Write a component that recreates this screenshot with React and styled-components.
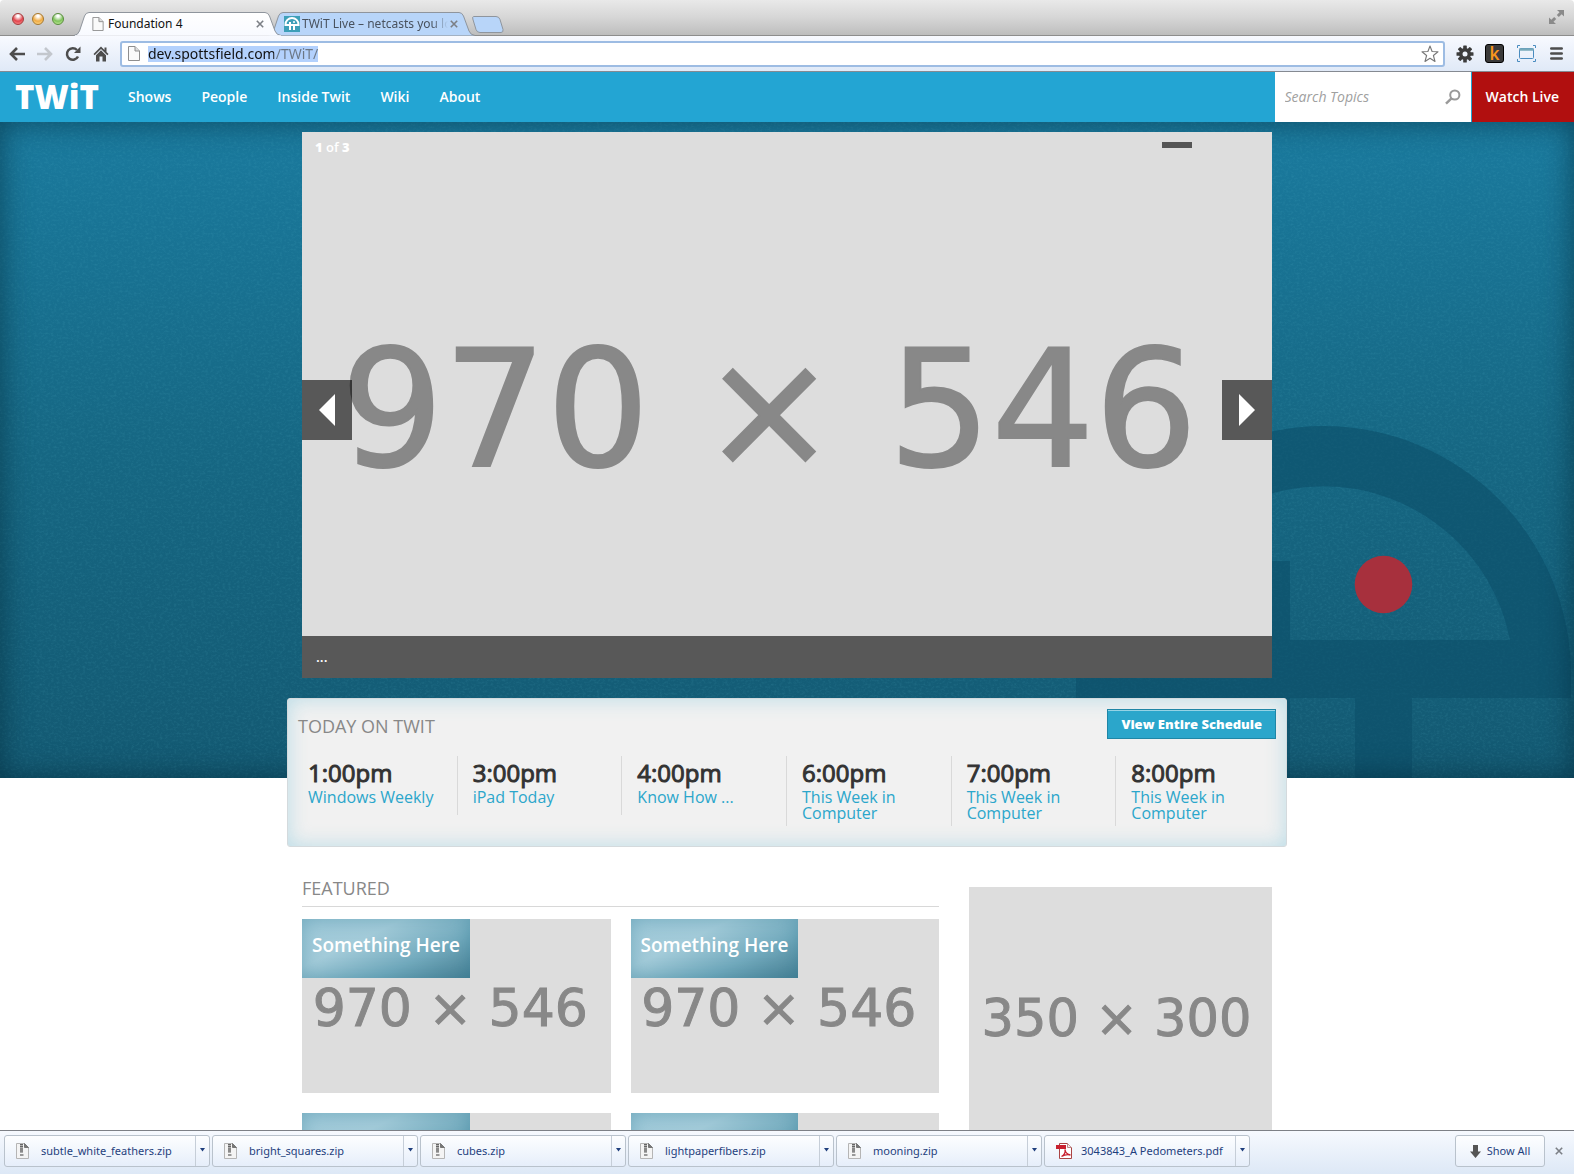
import React from "react";
import styled, { createGlobalStyle } from "styled-components";

const SITE = '"Open Sans", "Noto Sans", sans-serif';
const CHROME = '"Noto Sans", "Open Sans", sans-serif';

const GlobalStyle = createGlobalStyle`
  *, *::before, *::after { box-sizing: border-box; }
  body { margin: 0; background: #fff; font-family: ${SITE}; }
  h1, h2, p, ul { margin: 0; padding: 0; }
  ul { list-style: none; }
  a { color: inherit; text-decoration: none; }
  button { border: 0; padding: 0; background: none; color: inherit; font: inherit; cursor: pointer; }
  svg { display: block; flex: none; }
`;

const Window = styled.div`
  display: flex;
  flex-direction: column;
  height: 100vh;
`;

/* ---------- browser frame ---------- */

const TitleBar = styled.header`
  display: flex;
  align-items: flex-end;
  height: 36px;
  padding: 0 10px 0 12px;
  background: linear-gradient(#e9e9e9, #d6d6d6 50%, #bdbdbd);
  border-bottom: 1px solid #8d8d8d;
  border-radius: 4px 4px 0 0;
  font: 12px/24px ${CHROME};
`;

const Lights = styled.div`
  display: flex;
  gap: 8px;
  width: 62px;
  padding-bottom: 10px;
`;

const Light = styled.button`
  width: 12px;
  height: 12px;
  border-radius: 50%;
  border: 1px solid ${(p) => p.$edge};
  background: radial-gradient(circle at 50% 20%, #fff 0 10%, ${(p) => p.$fill} 55%, ${(p) => p.$glow});
`;

const Tabs = styled.div`
  display: flex;
  align-items: flex-end;
  flex: 1;
  margin-bottom: -1px;
`;

const Tab = styled.div`
  position: relative;
  z-index: ${(p) => (p.$active ? 1 : 0)};
  display: flex;
  align-items: center;
  gap: ${(p) => (p.$active ? 4 : 2)}px;
  width: 208px;
  height: 24px;
  padding: 0 18px 0 ${(p) => (p.$active ? 18 : 16)}px;
  margin-right: -14px;
  color: ${(p) => (p.$active ? "#111" : "#49525e")};
`;

const TabShape = styled.svg`
  position: absolute;
  inset: 0;
  z-index: -1;
`;

const TabLabel = styled.button`
  flex: 1;
  min-width: 0;
  overflow: hidden;
  white-space: nowrap;
  text-align: left;
  mask-image: ${(p) => (p.$fade ? "linear-gradient(90deg, #000 130px, transparent 146px)" : "none")};
`;

const NewTab = styled.button`
  margin: 0 0 3px 10px;
`;

const Toolbar = styled.div`
  display: flex;
  align-items: center;
  gap: 11px;
  height: 36px;
  padding: 0 9px 0 8px;
  background: linear-gradient(#f8faff, #e0e9f7);
  border-bottom: 1px solid #858a92;
`;

const Tool = styled.button`
  display: flex;
  width: ${(p) => p.$w || 17}px;
  justify-content: center;
  padding-bottom: ${(p) => p.$lift || 0}px;
`;

const Omnibox = styled.label`
  display: flex;
  align-items: center;
  flex: 1;
  gap: 8px;
  height: 26px;
  padding: 0 4px 0 6px;
  background: #fff;
  border: 2px solid #9dbce3;
  border-radius: 3px;
`;

const Address = styled.input`
  field-sizing: content;
  height: 16px;
  padding: 0;
  border: 0;
  outline: 0;
  font: 14px/16px ${CHROME};
  background: linear-gradient(90deg, #111 126px, #6b7684 126px) text, #b3d1fd;
  -webkit-text-fill-color: transparent;
`;

const Spacer = styled.span`
  flex: 1;
`;

/* ---------- site ---------- */

const Page = styled.div`
  flex: 1;
  min-height: 0;
  overflow-y: auto;
  scrollbar-width: none;
`;

const NavBar = styled.nav`
  display: flex;
  align-items: stretch;
  height: 50px;
  background: #23a5d3;
  color: #fff;
  font-size: 14px;
  font-weight: 600;
  line-height: 50px;
`;

const Brand = styled.a`
  padding: 0 14px 0 15px;
  font-size: 33px;
  font-weight: 800;
`;

const NavLink = styled.a`
  padding: 0 15px;
`;

const Search = styled.label`
  display: flex;
  align-items: center;
  width: 196px;
  margin-left: auto;
  margin-right: 1px;
  padding: 0 10px;
  background: #fff;
`;

const SearchField = styled.input`
  flex: 1;
  min-width: 0;
  padding: 0;
  border: 0;
  outline: 0;
  font: italic 14px/20px ${SITE};
  &::placeholder { color: #a0a0a0; }
`;

const WatchLive = styled.a`
  padding: 0 15px 0 14px;
  background: #b10f0f;
`;

const Hero = styled.section`
  position: relative;
  padding: 10px 0 100px;
  background: linear-gradient(#1a7a9e, #166783 50%, #135972);
  &::after {
    content: "";
    position: absolute;
    inset: 0;
    box-shadow: inset 0 0 30px rgba(0, 35, 50, 0.6);
    pointer-events: none;
  }
`;

const Leather = styled.svg`
  position: absolute;
  inset: 0;
  width: 100%;
  height: 100%;
`;

const Watermark = styled.svg`
  position: absolute;
  right: 0;
  bottom: 0;
`;

const Slider = styled.div`
  position: relative;
  z-index: 1;
  max-width: 970px;
  margin: 0 auto;
`;

const Placeholder = styled.div`
  display: flex;
  align-items: center;
  justify-content: center;
  aspect-ratio: ${(p) => p.$ratio};
  padding: ${(p) => p.$drop}px ${(p) => p.$shift}px 0 0;
  overflow: hidden;
  background: #ddd;
  color: #888;
  font-family: "DejaVu Sans", sans-serif;
  font-size: ${(p) => p.$size}px;
  line-height: 1;
  white-space: nowrap;
  -webkit-text-stroke: ${(p) => p.$stroke || 1}px #888;
`;

const SlideCount = styled.p`
  position: absolute;
  top: 5px;
  left: 13px;
  color: #fff;
  font-size: 13px;
  font-weight: 600;
  line-height: 20px;
`;

const Timer = styled.span`
  position: absolute;
  top: 10px;
  right: 80px;
  width: 30px;
  height: 6px;
  background: #555;
`;

const Arrow = styled.button`
  position: absolute;
  top: 248px;
  ${(p) => p.$side}: 0;
  display: flex;
  align-items: center;
  justify-content: center;
  width: 50px;
  height: 60px;
  background: rgba(0, 0, 0, 0.6);
`;

const Caption = styled.p`
  position: absolute;
  inset: auto 0 0;
  padding: 10px 14px;
  background: #585858;
  color: #fff;
  font-size: 14px;
  font-weight: 600;
  line-height: 22px;
`;

const Schedule = styled.section`
  position: relative;
  z-index: 2;
  max-width: 1000px;
  margin: -80px auto 0;
  padding: 10px;
  background: #f1f1f1;
  border: 1px solid #d4dadd;
  border-radius: 3px;
  box-shadow: inset 0 0 20px rgba(120, 195, 220, 0.45);
`;

const ScheduleHead = styled.div`
  display: flex;
  justify-content: space-between;
`;

const Heading = styled.h2`
  color: #888;
  font-size: 18px;
  font-weight: 400;
  line-height: ${(p) => (p.$ruled ? 28 : 34)}px;
  text-transform: uppercase;
  ${(p) => p.$ruled && "padding-bottom: 4px; border-bottom: 1px solid #d8d8d8; margin-bottom: 12px;"}
`;

const ScheduleButton = styled.button`
  height: 30px;
  padding: 0 13px;
  background: #2ba6cb;
  border: 1px solid #1f86a6;
  box-shadow: inset 0 1px 0 rgba(255, 255, 255, 0.5);
  color: #fff;
  font-size: 13px;
  font-weight: 800;
`;

const Slots = styled.ul`
  display: grid;
  grid-template-columns: repeat(6, 1fr);
  align-items: start;
  margin: 13px -4px 10px -6px;
`;

const Slot = styled.li`
  min-height: 59px;
  padding: 0 15px 5px;
  border-left: 1px solid #d9d9d9;
  &:first-child { border-color: transparent; }
`;

const SlotTime = styled.p`
  color: #333;
  font-size: 24px;
  font-weight: 400;
  line-height: 33px;
  -webkit-text-stroke: 1px #333;
`;

const SlotShow = styled.a`
  display: block;
  color: #2ba6cb;
  font-size: 16px;
  line-height: 16px;
`;

const Columns = styled.div`
  display: grid;
  grid-template-columns: 637fr 303fr;
  gap: 30px;
  max-width: 970px;
  margin: 27px auto 40px;
`;

const Cards = styled.div`
  display: grid;
  grid-template-columns: 1fr 1fr;
  gap: 20px;
`;

const Card = styled.a`
  position: relative;
  display: block;
`;

const Tag = styled.span`
  position: absolute;
  top: 0;
  left: 0;
  height: 59px;
  padding: 0 10px;
  color: #fff;
  font-size: 19px;
  font-weight: 600;
  line-height: 53px;
  white-space: nowrap;
  background: linear-gradient(155deg, #9dc8d8, #a3cbd9 35%, #72aabd 68%, #477f93);
  box-shadow: inset 0 0 18px rgba(50, 125, 150, 0.4);
`;

const Aside = styled.aside`
  padding-top: 13px;
`;

/* ---------- download shelf ---------- */

const Shelf = styled.footer`
  display: flex;
  align-items: flex-start;
  gap: 2px;
  height: 44px;
  padding: 4px 11px 0 4px;
  background: linear-gradient(#f6f9fe, #dde8f6);
  border-top: 1px solid #7d8086;
  color: #1f3f7d;
  font: 11px/30px ${CHROME};
`;

const Download = styled.div`
  display: flex;
  width: 206px;
  height: 32px;
  border: 1px solid #b9c2cc;
  border-radius: 3px;
  background: linear-gradient(#fdfeff, #e6eefa);
`;

const FileButton = styled.button`
  display: flex;
  align-items: center;
  flex: 1;
  min-width: 0;
  gap: 12px;
  padding-left: 11px;
  white-space: nowrap;
`;

const FileIcon = styled.span`
  width: 13px;
`;

const MenuButton = styled.button`
  display: flex;
  align-items: center;
  justify-content: center;
  width: 14px;
  padding-bottom: 3px;
  border-left: 1px solid #c6ced8;
`;

const ShowAll = styled.button`
  display: flex;
  align-items: center;
  justify-content: center;
  gap: 6px;
  width: 90px;
  height: 32px;
  margin: 0 8px 0 auto;
  border: 1px solid #b9c2cc;
  border-radius: 3px;
  background: linear-gradient(#fdfeff, #e9f0fa);
`;

const CloseShelf = styled.button`
  display: flex;
  align-items: center;
  height: 32px;
`;

/* ---------- drawings ---------- */

const Cross = ({ size = 8 }) => (
  <svg width={size} height={size} viewBox="0 0 8 8" stroke="#7b7f85" strokeWidth="1.6">
    <path d="M.8.8l6.4 6.4M7.2.8L.8 7.2" />
  </svg>
);

const PageIcon = ({ h = 15 }) => (
  <svg width="12" height={h} viewBox="0 0 12 15" fill="#fafafa" stroke="#8f8f8f">
    <path d="M.5.5h6.5l4.5 4.5v9.5H.5z" />
    <path d="M7 .5V5h4.5" fill="#ddd" />
  </svg>
);

const TabBackdrop = ({ active }) => (
  <TabShape width="208" height="24" viewBox="0 0 208 24">
    <defs>
      <linearGradient id="tabOn" x2="0" y2="1">
        <stop stopColor="#fff" />
        <stop offset="1" stopColor="#f8faff" />
      </linearGradient>
    </defs>
    <path
      d="M0 23.5Q4 23 5.500 19L10.500 4Q12 .5 15 .5H191Q194 .5 195.500 4L201 19Q202.500 23 207 23.500"
      fill={active ? "url(#tabOn)" : "#b8d5f9"}
      stroke="#8f959d"
    />
    {active && <path d="M1 24H207" stroke="#f8faff" strokeWidth="1.6" />}
  </TabShape>
);

const Favicon = () => (
  <svg width="16" height="16" viewBox="0 0 16 16">
    <rect width="16" height="16" fill="#3d9fb8" />
    <path d="M1.500 10V8.500a6.500 6.500 0 0 1 13 0V10" fill="none" stroke="#fff" strokeWidth="2" />
    <path d="M1 9h14M6 6v8M10 9v5" stroke="#fff" strokeWidth="2" fill="none" />
    <circle cx="10" cy="6" r="1" fill="#fff" />
  </svg>
);

const ArrowIcon = ({ flip, color }) => (
  <svg width="16" height="14" viewBox="0 0 16 14" fill="none" stroke={color} strokeWidth="2.6">
    <path d={flip ? "M0 7H14M8 1l6 6-6 6" : "M16 7H2M8 1L2 7l6 6"} />
  </svg>
);

const ReloadIcon = () => (
  <svg width="16" height="16" viewBox="0 0 16 16">
    <path d="M13 10.500A5.800 5.800 0 1 1 12 4" fill="none" stroke="#4d4d4d" strokeWidth="2.500" />
    <path d="M15.500.5V7H9z" fill="#4d4d4d" />
  </svg>
);

const HomeIcon = () => (
  <svg width="16" height="16" viewBox="0 0 16 16" fill="#4d4d4d">
    <path d="M8 .5L.5 8l1.200 1.200L8 3l6.300 6.200L15.500 8 13.500 6V1.500h-2V4z" />
    <path d="M8 4.300L3 9.200V15.500h3.500V10.500h3v5H13V9.200z" />
  </svg>
);

const StarIcon = () => (
  <svg width="18" height="18" viewBox="0 0 18 18" fill="#fff" stroke="#777" strokeWidth="1.100" strokeLinejoin="round">
    <path d="M9 1l2.100 5.500 5.900.3-4.600 3.700L14 16.500 9 13.200 4 16.500l1.600-6L1 6.800l5.900-.3z" />
  </svg>
);

const GearIcon = () => (
  <svg width="18" height="18" viewBox="-9 -9 18 18">
    <g fill="#3c3c3c">
      {[0, 45, 90, 135].map((a) => (
        <rect key={a} x="-1.800" y="-8.500" width="3.600" height="17" rx=".6" transform={`rotate(${a})`} />
      ))}
      <circle r="6" />
    </g>
    <circle r="2.500" fill="#eef3fb" />
  </svg>
);

const KBadge = styled.span`
  width: 19px;
  height: 19px;
  border: 1px solid #000;
  border-radius: 3px;
  background: #3a3a3a;
  color: #f7941d;
  font: 600 17px/17px ${CHROME};
  text-align: center;
`;

const CaptureIcon = () => (
  <svg width="19" height="17" viewBox="0 0 19 17" fill="none" stroke="#4a8cc0">
    <path d="M.5 3V.5H3M16 .5h2.500V3M18.500 14v2.500H16M3 16.500H.5V14" />
    <rect x="2.500" y="3.500" width="14" height="10" rx="1" />
    <path d="M2.500 4.500h14" strokeWidth="2.500" stroke="#7ab" />
  </svg>
);

const MenuIcon = () => (
  <svg width="13" height="13" viewBox="0 0 13 13" stroke="#4d4d4d" strokeWidth="2.600" strokeLinecap="round">
    <path d="M1.300 1.500h10.400M1.300 6.500h10.400M1.300 11.500h10.400" />
  </svg>
);

const FullscreenIcon = () => (
  <svg width="15" height="14" viewBox="0 0 15 14" fill="#8a8a8a">
    <path d="M8 0h7v6.500L12.700 4.300 9.800 7 7.800 5 10.500 2.200z" />
    <path d="M7 14H0V7.500L2.300 9.700 5.200 7 7.200 9 4.500 11.800z" />
  </svg>
);

const SearchIcon = () => (
  <svg width="16" height="16" viewBox="0 0 16 16" fill="none" stroke="#999" strokeWidth="2">
    <circle cx="9.800" cy="6" r="4.600" />
    <path d="M6.500 9.400L1 14.600" strokeWidth="2.500" />
  </svg>
);

const Triangle = ({ flip }) => (
  <svg width="16" height="32" viewBox="0 0 16 32" fill="#fff">
    <path d={flip ? "M0 0l16 16L0 32z" : "M16 0L0 16l16 16z"} />
  </svg>
);

const ZipIcon = () => (
  <svg width="13" height="16" viewBox="0 0 13 16">
    <path d="M.5.5h8L12.500 4.500v11H.5z" fill="#f4f4f4" stroke="#b5b5b5" />
    <path d="M8.500.5v4h4z" fill="#777" stroke="#777" />
    <path d="M5.500 1v9" stroke="#666" strokeWidth="3" strokeDasharray="1.500 .6" />
    <rect x="4" y="11" width="3.500" height="2" fill="#999" />
  </svg>
);

const PdfIcon = () => (
  <svg width="16" height="16" viewBox="0 0 16 16">
    <path d="M3.500.5h8l4 4v11h-12z" fill="#fff" stroke="#a44" />
    <path d="M11.500.5v4h4" fill="#eee" stroke="#b88" />
    <rect y="2" width="10" height="4" fill="#c8202f" />
    <path d="M5.500 13.500C9 11.500 9.500 9 9 6.500c.5 4 2.500 5 5.500 5.500-3-.7-6-.2-9 1.500z" fill="none" stroke="#c8202f" strokeWidth="1.300" />
  </svg>
);

const DownIcon = () => (
  <svg width="11" height="13" viewBox="0 0 11 13" fill="#555">
    <path d="M3 0h5v6.500h3L5.500 13 0 6.500h3z" />
  </svg>
);

const Caret = () => (
  <svg width="5" height="4" viewBox="0 0 5 4" fill="#1f3f7d">
    <path d="M0 0h5L2.500 3.500z" />
  </svg>
);

const LIGHTS = [
  ["Close", "#a33a3a", "#e2444c", "#ff9c9c"],
  ["Minimize", "#a6772c", "#f0ab43", "#ffe39a"],
  ["Zoom", "#578c3c", "#7fc35c", "#d2f5a8"],
];

const SLOTS = [
  ["1:00pm", "Windows Weekly"],
  ["3:00pm", "iPad Today"],
  ["4:00pm", "Know How ..."],
  ["6:00pm", "This Week in Computer"],
  ["7:00pm", "This Week in Computer"],
  ["8:00pm", "This Week in Computer"],
];

const FILES = [
  "subtle_white_feathers.zip",
  "bright_squares.zip",
  "cubes.zip",
  "lightpaperfibers.zip",
  "mooning.zip",
  "3043843_A Pedometers.pdf",
];

export default function App() {
  return (
    <Window>
      <GlobalStyle />
      <TitleBar>
        <Lights>
          {LIGHTS.map(([name, edge, fill, glow]) => (
            <Light key={name} aria-label={name} $edge={edge} $fill={fill} $glow={glow} />
          ))}
        </Lights>
        <Tabs>
          <Tab $active>
            <TabBackdrop active />
            <PageIcon h={14} />
            <TabLabel>Foundation 4</TabLabel>
            <button aria-label="Close tab"><Cross /></button>
          </Tab>
          <Tab>
            <TabBackdrop />
            <Favicon />
            <TabLabel $fade>TWiT Live – netcasts you love</TabLabel>
            <button aria-label="Close tab"><Cross /></button>
          </Tab>
          <NewTab aria-label="New tab">
            <svg width="32" height="17" viewBox="0 0 32 17">
              <path d="M1.500.5H24q3 0 4 3l3 10q.5 3-2 3H8q-3 0-4-3L.8 3Q.3.5 1.500.5z" fill="#b8d5f9" stroke="#8f959d" />
            </svg>
          </NewTab>
        </Tabs>
        <Tool $w={15} $lift={11} aria-label="Full screen"><FullscreenIcon /></Tool>
      </TitleBar>
      <Toolbar>
        <Tool aria-label="Back"><ArrowIcon color="#4d4d4d" /></Tool>
        <Tool aria-label="Forward"><ArrowIcon flip color="#c3c7cd" /></Tool>
        <Tool aria-label="Reload"><ReloadIcon /></Tool>
        <Tool aria-label="Home"><HomeIcon /></Tool>
        <Omnibox>
          <PageIcon />
          <Address aria-label="Address" defaultValue="dev.spottsfield.com/TWiT/" />
          <Spacer />
          <StarIcon />
        </Omnibox>
        <Tool aria-label="Settings"><GearIcon /></Tool>
        <Tool $w={21} aria-label="Extension"><KBadge>k</KBadge></Tool>
        <Tool $w={21} aria-label="Capture"><CaptureIcon /></Tool>
        <Tool aria-label="Menu"><MenuIcon /></Tool>
      </Toolbar>

      <Page>
        <NavBar>
          <Brand href="#">TWiT</Brand>
          {["Shows", "People", "Inside Twit", "Wiki", "About"].map((t) => (
            <NavLink key={t} href="#">{t}</NavLink>
          ))}
          <Search>
            <SearchField type="text" aria-label="Search topics" placeholder="Search Topics" />
            <SearchIcon />
          </Search>
          <WatchLive href="#">Watch Live</WatchLive>
        </NavBar>

        <Hero>
          <Leather aria-hidden="true">
            <filter id="leather" x="0" y="0" width="100%" height="100%">
              <feTurbulence type="fractalNoise" baseFrequency="0.35 0.45" numOctaves="3" seed="4" />
              <feColorMatrix values="0 0 0 0 0.15  0 0 0 0 0.6  0 0 0 0 0.72  0 1.600 0 0 -0.7" />
            </filter>
            <rect width="100%" height="100%" filter="url(#leather)" opacity="0.15" />
          </Leather>
          <Watermark width="500" height="352" viewBox="0 0 500 352" aria-hidden="true">
            <path
              fill="#0c4f69"
              fillOpacity="0.6"
              fillRule="evenodd"
              d="M2 272V249a247.500 249 0 0 1 495 0v23H338v80H281V272H216v80H159V272zM63 214H159V135h57v79H436A190 190 0 0 0 63 214z"
            />
            <circle cx="309.500" cy="158.500" r="28.800" fill="#a7303d" />
          </Watermark>
          <Slider>
            <Placeholder $ratio="970 / 546" $size={162} $shift={36} $drop={10} $stroke={2}>970 × 546</Placeholder>
            <SlideCount><b>1</b> of <b>3</b></SlideCount>
            <Timer />
            <Caption>...</Caption>
            <Arrow $side="left" aria-label="Previous slide"><Triangle /></Arrow>
            <Arrow $side="right" aria-label="Next slide"><Triangle flip /></Arrow>
          </Slider>
        </Hero>

        <Schedule>
          <ScheduleHead>
            <Heading>Today on TWiT</Heading>
            <ScheduleButton>View Entire Schedule</ScheduleButton>
          </ScheduleHead>
          <Slots>
            {SLOTS.map(([time, show]) => (
              <Slot key={time}>
                <SlotTime>{time}</SlotTime>
                <SlotShow href="#">{show}</SlotShow>
              </Slot>
            ))}
          </Slots>
        </Schedule>

        <Columns>
          <main>
            <Heading $ruled>Featured</Heading>
            <Cards>
              {[0, 1, 2, 3].map((i) => (
                <Card key={i} href="#">
                  <Placeholder $ratio="970 / 546" $size={52} $shift={12} $drop={4}>970 × 546</Placeholder>
                  <Tag>Something Here</Tag>
                </Card>
              ))}
            </Cards>
          </main>
          <Aside>
            <Placeholder $ratio="350 / 300" $size={51} $shift={8} $drop={4}>350 × 300</Placeholder>
          </Aside>
        </Columns>
      </Page>

      <Shelf>
        {FILES.map((f) => (
          <Download key={f}>
            <FileButton>
              <FileIcon>{f.endsWith(".pdf") ? <PdfIcon /> : <ZipIcon />}</FileIcon>
              {f}
            </FileButton>
            <MenuButton aria-label={`Options for ${f}`}><Caret /></MenuButton>
          </Download>
        ))}
        <ShowAll><DownIcon />Show All</ShowAll>
        <CloseShelf aria-label="Close downloads"><Cross /></CloseShelf>
      </Shelf>
    </Window>
  );
}
